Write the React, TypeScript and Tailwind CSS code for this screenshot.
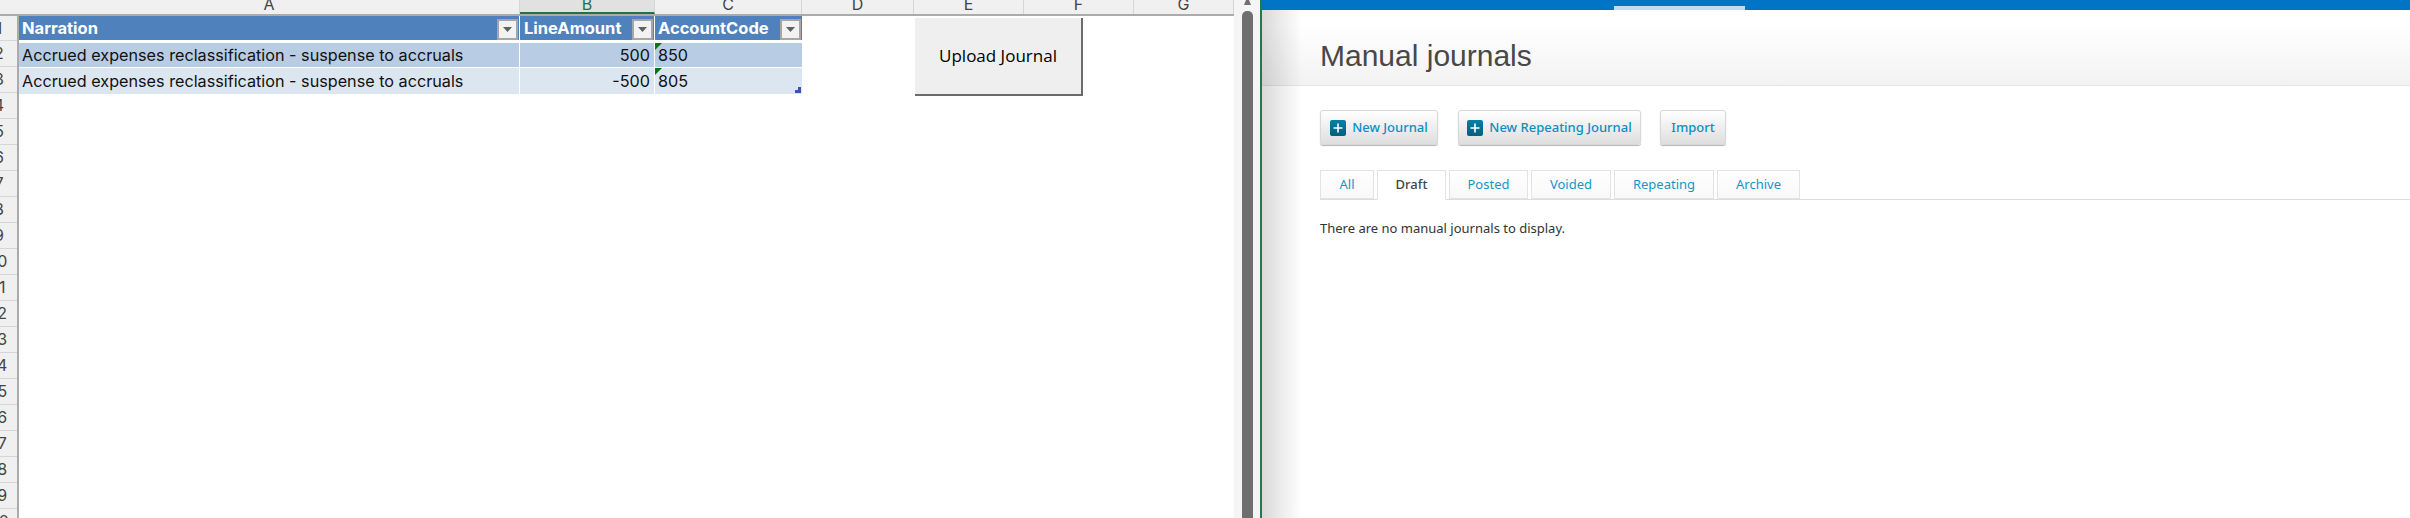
const colLabels = [
  { l: "A", w: "w-[501px]", sel: false },
  { l: "B", w: "w-[135px]", sel: true },
  { l: "C", w: "w-[147px]", sel: false },
  { l: "D", w: "w-[112px]", sel: false },
  { l: "E", w: "w-[110px]", sel: false },
  { l: "F", w: "w-[110px]", sel: false },
  { l: "G", w: "w-[100px]", sel: false },
];
const rowNums = Array.from({ length: 20 }, (_, i) => i + 1);

function FilterBtn() {
  return (
    <div className="absolute right-[1px] bottom-0 flex h-[21px] w-[21px] items-center justify-center border-2 border-[#a6a6a6] bg-[#f2f2f2]">
      <svg width="9" height="5" viewBox="0 0 9 5"><path d="M0 0h9L4.5 5z" fill="#606060" /></svg>
    </div>
  );
}

function Tick() {
  return (
    <svg className="absolute left-0 top-0" width="7" height="7" viewBox="0 0 7 7"><path d="M0 0h7L0 7z" fill="#00761c" /></svg>
  );
}

function Btn({ label, icon, w }: { label: string; icon?: boolean; w: string }) {
  return (
    <div className={`${w} flex h-[35px] items-center justify-center gap-[6px] rounded-[3px] border border-[#d8d8d8] bg-gradient-to-b from-white to-[#dedede] shadow-[0_1px_1px_#b5b5b5]`}>
      {icon && (
        <div className="flex h-[16px] w-[16px] items-center justify-center rounded-[2px] bg-gradient-to-b from-[#0a7fa8] to-[#005f80]">
          <svg width="10" height="10" viewBox="0 0 10 10"><path d="M5 0.5v9M0.5 5h9" stroke="#fff" strokeWidth="1.6" /></svg>
        </div>
      )}
      <span className="font-['Noto_Sans'] text-[13px] font-medium text-[#0b8fc4]">{label}</span>
    </div>
  );
}

function Tab({ label, w, active }: { label: string; w: string; active?: boolean }) {
  return (
    <div className={`${w} flex items-center justify-center border border-[#e3e3e3] font-['Noto_Sans'] text-[13px] ${active ? "relative z-10 h-[30px] border-b-white bg-white font-medium text-[#444]" : "h-[29px] bg-gradient-to-b from-white to-[#f8f8f8] text-[#1595c8]"}`}>
      {label}
    </div>
  );
}

export default function App() {
  return (
    <div className="flex h-[518px] w-[2410px] overflow-hidden bg-white">
      <div className="relative flex h-full w-[1234px] shrink-0 flex-col overflow-hidden bg-white">
        <div className="flex h-[16px] shrink-0 border-b-2 border-[#ababab] bg-[#f0f0f0] text-[#444] font-['Inter'] text-[16px]">
          <div className="w-[19px] shrink-0" />
          {colLabels.map((c) => (
            <div key={c.l} className={`${c.w} shrink-0 overflow-hidden border-r border-[#d6d6d6] text-center leading-[8px] ${c.sel ? "border-b-2 border-b-[#217346] bg-[#e1e1e1] text-[#217346]" : ""}`}>
              {c.l}
            </div>
          ))}
        </div>
        <div className="flex min-h-0 flex-1">
          <div className="h-full w-[19px] shrink-0 overflow-hidden border-r-2 border-[#ababab] bg-[#f0f0f0] font-['Inter'] text-[16px] text-[#444]">
            {rowNums.map((n) => (
              <div key={n} className={`${n === 1 ? "h-[25px]" : "h-[26px]"} overflow-hidden border-b border-[#d6d6d6]`}>
                <div className="-ml-[20px] w-[38px] text-center leading-[25px]">{n}</div>
              </div>
            ))}
          </div>
          <div className="flex-1 font-['Inter'] text-[16.2px] text-[#111]">
            <div className="flex h-[27px] border-b-[3px] border-white text-[16.5px] font-bold text-white">
              <div className="relative flex w-[500px] items-center bg-[#4f81bd] pl-[3px]">Narration<FilterBtn /></div>
              <div className="relative ml-px flex w-[134px] items-center bg-[#4f81bd] pl-[4px]">LineAmount<FilterBtn /></div>
              <div className="relative ml-px flex w-[147px] items-center bg-[#4f81bd] pl-[3px]">AccountCode<FilterBtn /></div>
            </div>
            <div className="flex h-[25px] border-b border-white">
              <div className="flex w-[500px] items-center bg-[#b8cce4] pl-[3px]">Accrued expenses reclassification - suspense to accruals</div>
              <div className="ml-px flex w-[134px] items-center justify-end bg-[#b8cce4] pr-[4px]">500</div>
              <div className="relative ml-px flex w-[147px] items-center bg-[#b8cce4] pl-[3px]"><Tick />850</div>
            </div>
            <div className="flex h-[26px]">
              <div className="flex w-[500px] items-center bg-[#dce6f1] pl-[3px]">Accrued expenses reclassification - suspense to accruals</div>
              <div className="ml-px flex w-[134px] items-center justify-end bg-[#dce6f1] pr-[4px]">-500</div>
              <div className="relative ml-px flex w-[147px] items-center bg-[#dce6f1] pl-[3px]">
                <Tick />805
                <svg className="absolute bottom-[1px] right-[1px]" width="6" height="6" viewBox="0 0 6 6"><path d="M6 0v6H0V3h3V0z" fill="#4050b0" /></svg>
              </div>
            </div>
          </div>
        </div>
        <div className="absolute left-[915px] top-[18px] flex h-[78px] w-[168px] items-center justify-center border-b-2 border-r-2 border-[#6b6b6b] bg-[#efefef] font-['Open_Sans'] text-[17px] text-[#000]">
          Upload Journal
        </div>
      </div>

      <div className="flex h-full w-[26px] shrink-0 flex-col bg-[#f5f5f5] pl-[8px] pr-[7px]">
        <svg className="shrink-0" width="11" height="5" viewBox="0 0 11 5"><path d="M2 5 L4 0 H7 L9 5z" fill="#707070" /></svg>
        <div className="mt-[6px] flex-1 rounded-t-[5px] bg-[#6f6f6f]" />
      </div>
      <div className="w-[2px] shrink-0 bg-[#1f7a4d]" />

      <div className="relative flex min-w-0 flex-1 flex-col bg-white">
        <div className="flex h-[10px] shrink-0 items-end bg-[#0075c6] pl-[352px]">
          <div className="h-[4px] w-[131px] bg-[#c3daf0]" />
        </div>
        <div className="flex h-[76px] shrink-0 items-center border-b border-[#e4e4e4] bg-gradient-to-b from-white from-20% to-[#f2f2f2] pl-[58px] pt-[15px]">
          <h1 className="font-['Liberation_Sans'] text-[30px] text-[#484848]">Manual journals</h1>
        </div>
        <div className="flex flex-col pl-[58px]">
          <div className="mt-[24px] flex">
            <Btn label="New Journal" icon w="w-[118px]" />
            <div className="w-[20px]" />
            <Btn label="New Repeating Journal" icon w="w-[183px]" />
            <div className="w-[19px]" />
            <Btn label="Import" w="w-[66px]" />
          </div>
          <div className="mt-[25px] flex h-[30px] items-start gap-[3px] border-b border-[#dcdcdc]">
            <Tab label="All" w="w-[54px]" />
            <Tab label="Draft" w="w-[69px]" active />
            <Tab label="Posted" w="w-[79px]" />
            <Tab label="Voided" w="w-[80px]" />
            <Tab label="Repeating" w="w-[100px]" />
            <Tab label="Archive" w="w-[83px]" />
          </div>
          <p className="mt-[19px] font-['Noto_Sans'] text-[13px] text-[#333]">There are no manual journals to display.</p>
        </div>
        <div className="pointer-events-none absolute bottom-0 left-0 top-[10px] w-[40px] bg-gradient-to-r from-[#00000026] to-transparent" />
      </div>
    </div>
  );
}
